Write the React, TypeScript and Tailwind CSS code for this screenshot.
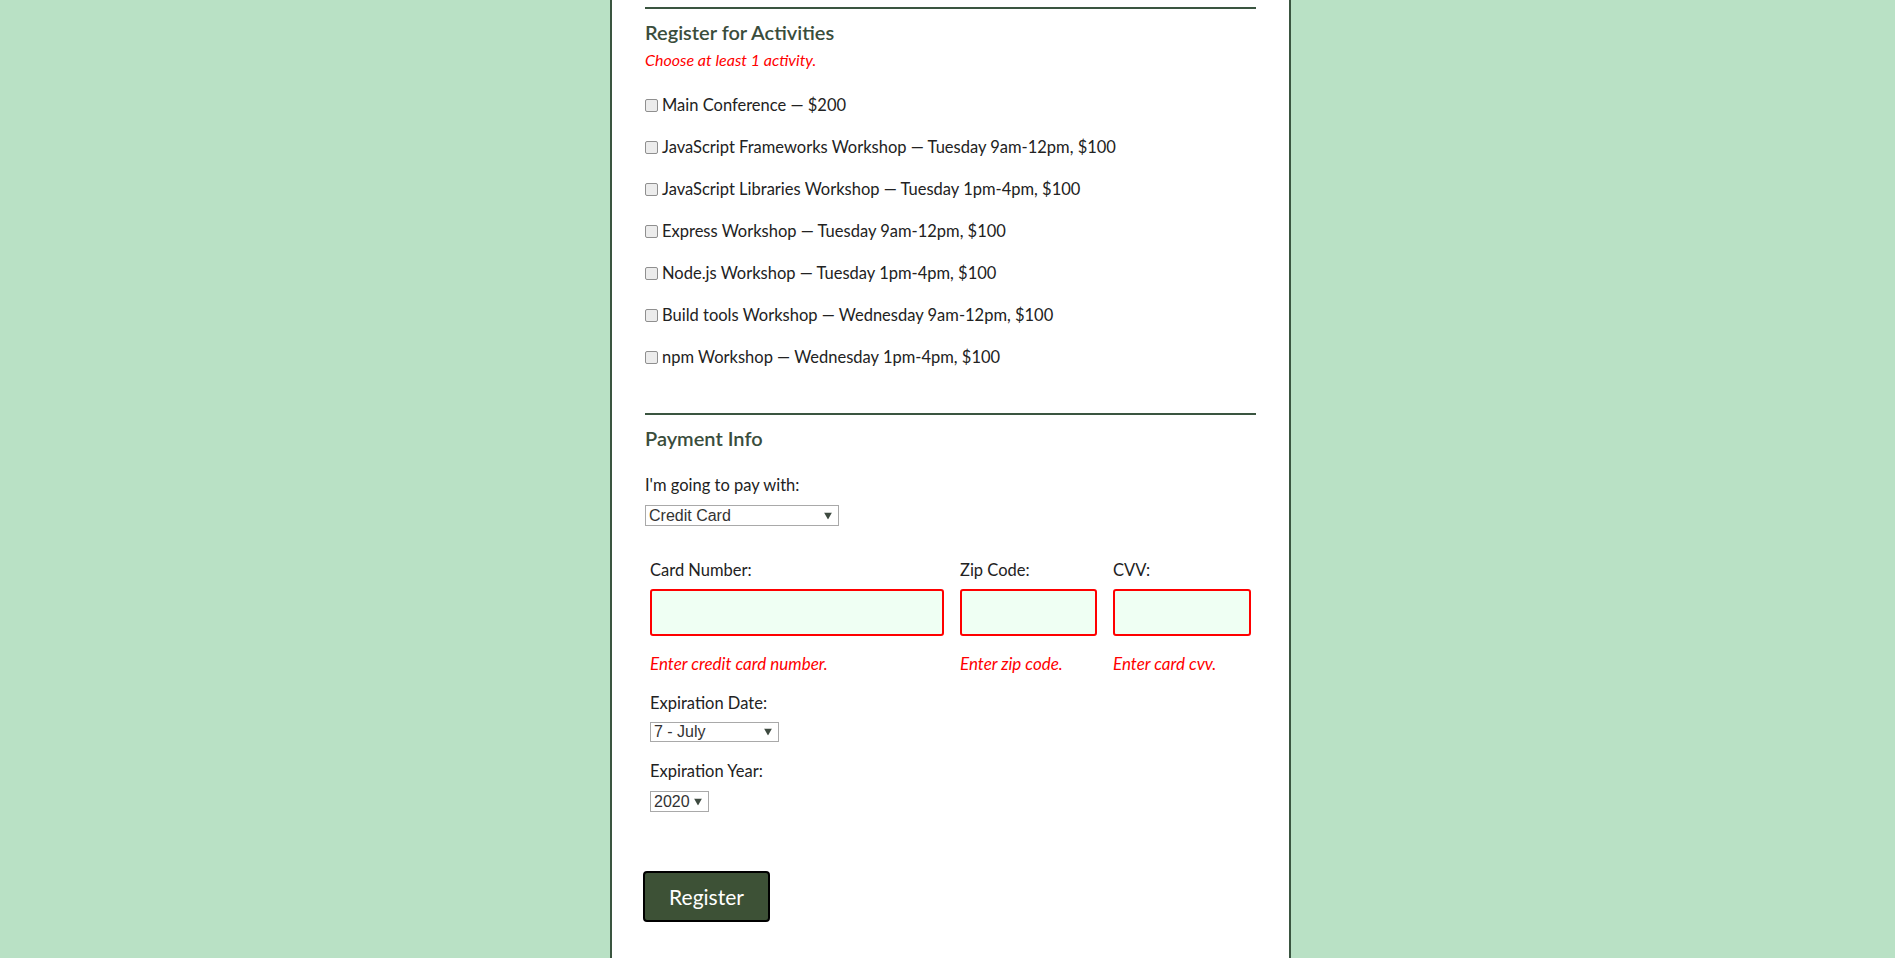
import React from "react";

const activities = [
  "Main Conference — $200",
  "JavaScript Frameworks Workshop — Tuesday 9am-12pm, $100",
  "JavaScript Libraries Workshop — Tuesday 1pm-4pm, $100",
  "Express Workshop — Tuesday 9am-12pm, $100",
  "Node.js Workshop — Tuesday 1pm-4pm, $100",
  "Build tools Workshop — Wednesday 9am-12pm, $100",
  "npm Workshop — Wednesday 1pm-4pm, $100",
];

function Select({ value, className }: { value: string; className: string }) {
  return (
    <div
      className={`relative flex items-center border border-[#a9a9a9] bg-white pl-[3px] font-['Liberation_Sans',Arial,sans-serif] text-[16px] leading-none text-[#333] ${className}`}
    >
      <span>{value}</span>
      <svg
        className="absolute right-[6px] top-1/2 -translate-y-1/2"
        width="8"
        height="7"
        viewBox="0 0 8 7"
      >
        <path d="M0 0 H8 L4 7 Z" fill="#3e4a40" />
      </svg>
    </div>
  );
}

function Field({
  label,
  error,
  width,
}: {
  label: string;
  error: string;
  width: string;
}) {
  return (
    <div className={`flex flex-col ${width}`}>
      <p className="h-[20px] leading-[20px]">{label}</p>
      <div className="mt-[9px] h-[47px] rounded-[3px] border-2 border-[#ff0000] bg-[#effff3]" />
      <p className="mt-[18px] h-[20px] text-[17px] italic leading-[20px] text-[#ff0000]">
        {error}
      </p>
    </div>
  );
}

export default function App() {
  return (
    <div className="flex min-h-screen justify-center bg-[#b9e1c5] pl-[6px] font-['Lato','Open_Sans',sans-serif] text-[16.5px] text-[#222]">
      <div className="flex w-[681px] flex-col border-x-2 border-[#3a5540] bg-white px-[33px] pb-[40px]">
        {/* activities */}
        <div className="mt-[7px] h-[2px] bg-[#3a5540]" />
        <h2 className="mt-[11px] h-[24px] text-[20px] font-semibold leading-[24px] text-[#3a4d3c]">
          Register for Activities
        </h2>
        <p className="mt-[6px] h-[20px] text-[16px] italic leading-[20px] text-[#ff0000]">
          Choose at least 1 activity.
        </p>
        <div className="mt-[25px] flex flex-col gap-[22px]">
          {activities.map((a) => (
            <label key={a} className="flex h-[20px] items-center leading-[20px]">
              <span className="mr-[4px] h-[13px] w-[13px] rounded-[2px] border border-[#8f8f8f] bg-[#ececec]" />
              {a}
            </label>
          ))}
        </div>

        {/* payment */}
        <div className="mt-[46px] h-[2px] bg-[#3a5540]" />
        <h2 className="mt-[11px] h-[24px] text-[20px] font-semibold leading-[24px] text-[#3a4d3c]">
          Payment Info
        </h2>
        <p className="mt-[25px] h-[20px] leading-[20px]">I'm going to pay with:</p>
        <Select value="Credit Card" className="mt-[10px] h-[21px] w-[194px]" />

        <div className="mt-[34px] flex flex-col px-[5px]">
          <div className="flex gap-[16px]">
            <Field label="Card Number:" error="Enter credit card number." width="w-[294px]" />
            <Field label="Zip Code:" error="Enter zip code." width="w-[137px]" />
            <Field label="CVV:" error="Enter card cvv." width="w-[138px]" />
          </div>

          <p className="mt-[19px] h-[20px] leading-[20px]">Expiration Date:</p>
          <Select value="7 - July" className="mt-[9px] h-[20px] w-[129px]" />
          <p className="mt-[19px] h-[20px] leading-[20px]">Expiration Year:</p>
          <Select value="2020" className="mt-[10px] h-[21px] w-[59px]" />
        </div>

        <button className="-ml-[2px] mt-[59px] flex h-[51px] w-[127px] items-center justify-center rounded-[4px] border-2 border-black bg-[#3d5136] text-[21px] text-white">
          Register
        </button>
      </div>
    </div>
  );
}
